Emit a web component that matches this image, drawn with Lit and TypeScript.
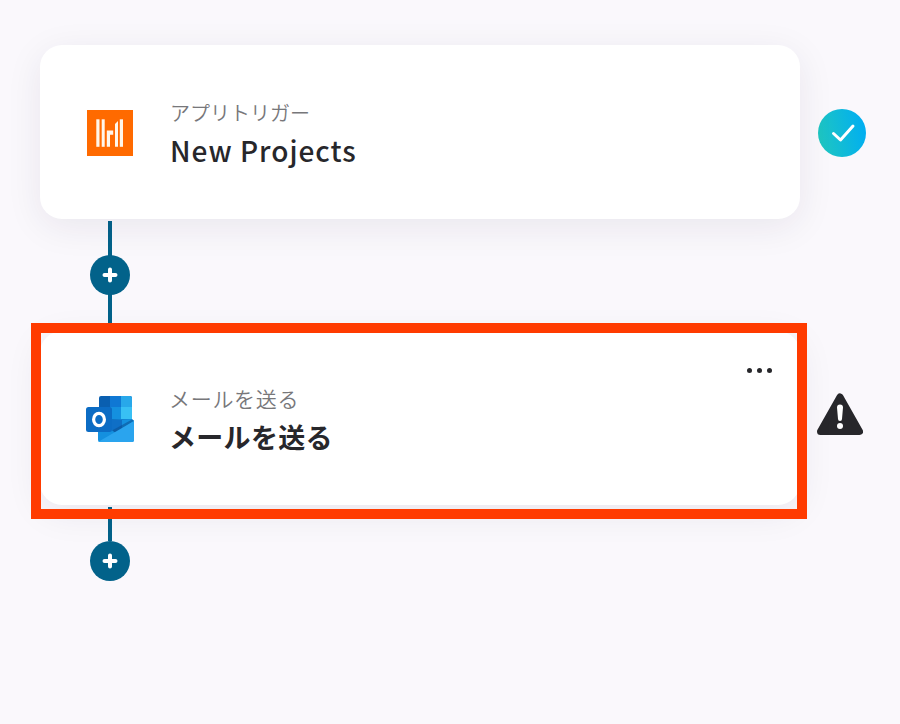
import { LitElement, html, css } from "lit";
import { customElement } from "lit/decorators.js";

const plus = html`<svg class="plus" viewBox="0 0 40 40" width="40" height="40">
  <circle cx="20" cy="20" r="20" fill="#02628a"></circle>
  <path d="M20 14.500v11M14.500 20h11" stroke="#fff" stroke-width="4" stroke-linecap="round"></path>
</svg>`;

const yoomLogo = html`<svg viewBox="0 0 46 46" width="46" height="46">
  <rect width="46" height="46" fill="#ff6a00"></rect>
  <g fill="#fff6ea">
    <rect x="9.300" y="9.300" width="3.200" height="27.500"></rect>
    <rect x="14.700" y="9.300" width="3" height="27.500"></rect>
    <path d="M19.800 20.500h6.400v4.200h-3.200v12.100h-3.200z"></path>
    <path d="M28 14l3-3v25.800h-3z"></path>
    <rect x="32.800" y="9.300" width="3.200" height="27.500"></rect>
  </g>
</svg>`;

const outlookLogo = html`<svg viewBox="0 0 49 46" width="49" height="46">
  <path d="M15 0h29a2 2 0 0 1 2 2v24H13V2a2 2 0 0 1 2-2z" fill="#0a5fb0"></path>
  <rect x="24" y="0" width="11" height="11" fill="#0f78d4"></rect>
  <path d="M35 0h9a2 2 0 0 1 2 2v9H35z" fill="#28a8ea"></path>
  <rect x="24" y="11" width="11" height="12" fill="#1490df"></rect>
  <rect x="35" y="11" width="11" height="12" fill="#38c0f4"></rect>
  <rect x="13" y="11" width="11" height="12" fill="#0c6cc0"></rect>
  <path d="M46 23l2 1.800V44a2 2 0 0 1-2 2H14a2 2 0 0 1-2-2V24z" fill="#1490df"></path>
  <path d="M12 24h24v10l-6 3z" fill="#0f6fc6"></path>
  <path d="M46 23.500l2 1.300L30 37l-4-2.500z" fill="#0b4f8f" opacity=".55"></path>
  <path d="M12 46l36-21v19a2 2 0 0 1-2 2z" fill="#2aa4ee"></path>
  <rect x="0" y="11" width="26" height="25" rx="2.500" fill="#0c6cc4"></rect>
  <ellipse cx="13" cy="23.500" rx="5.400" ry="6.200" fill="none" stroke="#fff" stroke-width="3.200"></ellipse>
</svg>`;

@customElement("app-root")
export class AppRoot extends LitElement {
  static styles = css`
    :host {
      display: block;
      min-height: 724px;
      background: #faf8fc;
      overflow: hidden;
      font-family: "Noto Sans CJK JP", "Noto Sans", sans-serif;
    }
    .flow {
      position: relative;
      display: flex;
      flex-direction: column;
      width: 760px;
      padding: 45px 0 0 40px;
    }
    .row {
      display: flex;
      align-items: center;
      gap: 18px;
      width: 826px;
    }
    .card {
      position: relative;
      box-sizing: border-box;
      flex: 0 0 760px;
      height: 174px;
      background: #fff;
      border-radius: 22px;
      box-shadow: 0 8px 36px rgba(40, 30, 60, 0.08);
      display: flex;
      align-items: center;
      padding: 0 0 0 47px;
      z-index: 1;
    }
    .logo {
      flex: 0 0 46px;
      width: 46px;
      min-width: 0;
      display: flex;
      justify-content: flex-start;
      margin-right: 37px;
      padding-top: 2px;
    }
    .logo.wide {
      margin-left: -1px;
      margin-right: 37px;
      padding-top: 1px;
    }
    .logo svg {
      display: block;
      flex: none;
    }
    .texts {
      display: flex;
      flex-direction: column;
      gap: 7px;
      padding-top: 3px;
    }
    .texts.low {
      gap: 9px;
      padding-top: 3px;
    }
    .label {
      font-size: 20px;
      line-height: 26px;
      font-weight: 350;
      color: #77777a;
    }
    .label.ja {
      font-size: 21px;
      letter-spacing: 0.700px;
    }
    .title {
      font-size: 28px;
      line-height: 34px;
      font-weight: 500;
      color: #27272b;
      letter-spacing: 1px;
    }
    .title.ja {
      font-size: 27px;
      font-weight: 700;
      letter-spacing: 0.300px;
    }
    .link {
      position: relative;
      width: 4px;
      margin-left: 68px;
      margin-top: 2px;
      background: #02628a;
      display: flex;
      justify-content: center;
    }
    .link.a {
      height: 110px;
    }
    .link.b {
      height: 34px;
    }
    .plus {
      position: absolute;
      left: -18px;
      top: 34px;
      display: block;
    }
    .status {
      display: block;
      flex: none;
    }
    .status.check {
      margin-top: 2px;
    }
    .status.warn {
      margin: -8px 0 0 -1px;
    }
    .dots {
      position: absolute;
      right: 28px;
      top: 37px;
      display: flex;
      gap: 5px;
    }
    .dots i {
      width: 5px;
      height: 5px;
      border-radius: 50%;
      background: #27272b;
    }
    .mark {
      position: absolute;
      left: 31px;
      top: 323px;
      width: 776px;
      height: 196px;
      box-sizing: border-box;
      border: 10px solid #ff3b00;
      z-index: 2;
      pointer-events: none;
    }
  `;

  render() {
    return html`
      <div class="flow">
        <div class="row">
          <div class="card">
            <div class="logo">${yoomLogo}</div>
            <div class="texts">
              <div class="label">アプリトリガー</div>
              <div class="title">New Projects</div>
            </div>
          </div>
          <svg class="status check" viewBox="0 0 48 48" width="48" height="48">
            <defs>
              <linearGradient id="chk" x1="0" y1="0.6" x2="1" y2="0.4">
                <stop offset="0" stop-color="#1fc6c0"></stop>
                <stop offset="1" stop-color="#00aef2"></stop>
              </linearGradient>
            </defs>
            <circle cx="24" cy="24" r="24" fill="url(#chk)"></circle>
            <path d="M15.500 24.500l7 6.500 12.500-14" fill="none" stroke="#fff" stroke-width="3" stroke-linecap="round" stroke-linejoin="round"></path>
          </svg>
        </div>
        <div class="link a">${plus}</div>
        <div class="row">
          <div class="card">
            <div class="logo wide">${outlookLogo}</div>
            <div class="texts low">
              <div class="label ja">メールを送る</div>
              <div class="title ja">メールを送る</div>
            </div>
            <div class="dots"><i></i><i></i><i></i></div>
          </div>
          <svg class="status warn" viewBox="0 0 46 42" width="46" height="42">
            <path d="M23 4L42.500 38.500H3.500z" fill="#27272b" stroke="#27272b" stroke-width="7" stroke-linejoin="round"></path>
            <path d="M20 14.500a3 3 0 0 1 6 0L25 26a2 2 0 0 1-4 0z" fill="#fff"></path>
            <circle cx="23" cy="33" r="3" fill="#fff"></circle>
          </svg>
        </div>
        <div class="link b">${plus}</div>
        <div class="mark"></div>
      </div>
    `;
  }
}
